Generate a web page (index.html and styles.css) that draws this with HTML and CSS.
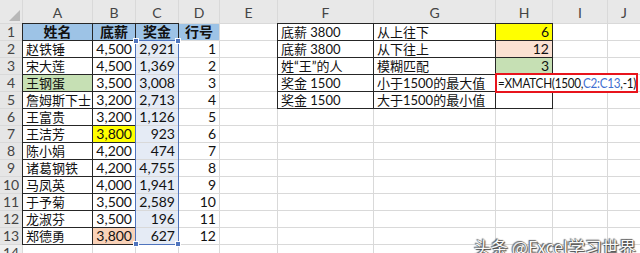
FILE: index.html
```html
<!DOCTYPE html>
<html lang="zh">
<head>
<meta charset="utf-8">
<link rel="stylesheet" href="styles.css">
</head>
<body>
<div class="sheet">
  <div class="corner"><span class="tri"></span></div>
  <div class="ch">A</div><div class="ch">B</div><div class="ch">C</div><div class="ch">D</div><div class="ch">E</div><div class="ch">F</div><div class="ch">G</div><div class="ch">H</div><div class="ch">I</div><div class="ch">J</div>

  <div class="rh">1</div><div class="c hd bk">姓名</div><div class="c hd bk">底薪</div><div class="c hd bk">奖金</div><div class="c hd">行号</div><div class="c"></div><div class="c t bk">底薪 3800</div><div class="c t bk">从上往下</div><div class="c n bk y">6</div><div class="c"></div><div class="c"></div>
  <div class="rh">2</div><div class="c t bk">赵铁锤</div><div class="c n bk">4,500</div><div class="c n s">2,921</div><div class="c n">1</div><div class="c"></div><div class="c t bk">底薪 3800</div><div class="c t bk">从下往上</div><div class="c n bk p">12</div><div class="c"></div><div class="c"></div>
  <div class="rh">3</div><div class="c t bk">宋大莲</div><div class="c n bk">4,500</div><div class="c n s">1,369</div><div class="c n">2</div><div class="c"></div><div class="c t bk">姓“王”的人</div><div class="c t bk">模糊匹配</div><div class="c n bk g">3</div><div class="c"></div><div class="c"></div>
  <div class="rh">4</div><div class="c t bk g">王钢蛋</div><div class="c n bk">3,500</div><div class="c n s">3,008</div><div class="c n">3</div><div class="c"></div><div class="c t bk">奖金 1500</div><div class="c t bk">小于1500的最大值</div><div class="c bk"></div><div class="c"></div><div class="c"></div>
  <div class="rh">5</div><div class="c t bk">詹姆斯下士</div><div class="c n bk">3,200</div><div class="c n s">2,713</div><div class="c n">4</div><div class="c"></div><div class="c t bk">奖金 1500</div><div class="c t bk">大于1500的最小值</div><div class="c bk"></div><div class="c"></div><div class="c"></div>
  <div class="rh">6</div><div class="c t bk">王富贵</div><div class="c n bk">3,200</div><div class="c n s">1,126</div><div class="c n">5</div><div class="c"></div><div class="c"></div><div class="c"></div><div class="c"></div><div class="c"></div><div class="c"></div>
  <div class="rh">7</div><div class="c t bk">王洁芳</div><div class="c n bk y">3,800</div><div class="c n s">923</div><div class="c n">6</div><div class="c"></div><div class="c"></div><div class="c"></div><div class="c"></div><div class="c"></div><div class="c"></div>
  <div class="rh">8</div><div class="c t bk">陈小娟</div><div class="c n bk">4,200</div><div class="c n s">474</div><div class="c n">7</div><div class="c"></div><div class="c"></div><div class="c"></div><div class="c"></div><div class="c"></div><div class="c"></div>
  <div class="rh">9</div><div class="c t bk">诸葛钢铁</div><div class="c n bk">4,200</div><div class="c n s">4,755</div><div class="c n">8</div><div class="c"></div><div class="c"></div><div class="c"></div><div class="c"></div><div class="c"></div><div class="c"></div>
  <div class="rh">10</div><div class="c t bk">马凤英</div><div class="c n bk">4,000</div><div class="c n s">1,941</div><div class="c n">9</div><div class="c"></div><div class="c"></div><div class="c"></div><div class="c"></div><div class="c"></div><div class="c"></div>
  <div class="rh">11</div><div class="c t bk">于予菊</div><div class="c n bk">3,500</div><div class="c n s">2,589</div><div class="c n">10</div><div class="c"></div><div class="c"></div><div class="c"></div><div class="c"></div><div class="c"></div><div class="c"></div>
  <div class="rh">12</div><div class="c t bk">龙淑芬</div><div class="c n bk">3,500</div><div class="c n s">196</div><div class="c n">11</div><div class="c"></div><div class="c"></div><div class="c"></div><div class="c"></div><div class="c"></div><div class="c"></div>
  <div class="rh">13</div><div class="c t bk">郑德勇</div><div class="c n bk pk">3,800</div><div class="c n s">627</div><div class="c n">12</div><div class="c"></div><div class="c"></div><div class="c"></div><div class="c"></div><div class="c"></div><div class="c"></div>
  <div class="rh lt">14</div><div class="c"></div><div class="c"></div><div class="c"></div><div class="c"></div><div class="c"></div><div class="c"></div><div class="c"></div><div class="c"></div><div class="c"></div><div class="c"></div>

  <div class="sel"><span class="hdl tl"></span><span class="hdl tr"></span><span class="hdl bl"></span><span class="hdl br"></span></div>
  <div class="formula"><span class="ftxt">=XMATCH(1500,<span class="ref">C2:C13</span>,-1)</span></div>
  <div class="mark">头条 @Excel学习世界</div>
</div>
</body>
</html>
```
FILE: styles.css
```css
html, body {
  margin: 0;
  padding: 0;
  background: #fff;
  overflow: hidden;
}
.sheet {
  position: relative;
  width: 640px;
  height: 253px;
  overflow: hidden;
  display: grid;
  grid-template-columns: 22px 69px 42px 42px 40px 57px 95px 121px 56px 54px 32px;
  grid-template-rows: 23px repeat(14, 16px);
  gap: 1px;
  background: #d9d9d9;
  font-family: Lato, "Noto Sans CJK SC", sans-serif;
  font-size: 14px;
  line-height: 16px;
  color: #111;
}
.corner {
  background: #e8e8e8;
  position: relative;
}
.tri {
  position: absolute;
  right: 2px;
  bottom: 2px;
  width: 0;
  height: 0;
  border-left: 11px solid transparent;
  border-bottom: 11px solid #b8b8b8;
}
.ch {
  background: #e8e8e8;
  color: #444;
  text-align: center;
  padding-top: 5px;
  font-size: 14px;
}
.rh {
  background: #e6e6e6;
  color: #444;
  text-align: center;
  font-size: 14px;
}
.rh.lt { background: #efefef; }
.c {
  background: #fff;
  white-space: nowrap;
  overflow: visible;
}
.t {
  padding-left: 3px;
  font-size: 13px;
}
.n {
  text-align: right;
  padding-right: 3px;
  font-size: 14px;
}
.hd {
  background: #9dc3e6;
  font-weight: bold;
  text-align: center;
  font-size: 14px;
}
.bk { box-shadow: 0 0 0 1px #262626; }
.s { background: #e5ebf5; }
.y { background: #ffff00; }
.p { background: #fbe1d2; }
.pk { background: #f9d2b8; }
.g { background: #c6e0b4; }
.sel {
  position: absolute;
  grid-column: 4 / 5;
  grid-row: 3 / 15;
  top: -1px;
  left: -1px;
  right: -1px;
  bottom: -1px;
  border: 1px solid #4f74bd;
}
.hdl {
  position: absolute;
  width: 4px;
  height: 4px;
  background: #4f74bd;
  border: 1px solid #fff;
}
.tl { top: -3px; left: -3px; }
.tr { top: -3px; right: -3px; }
.bl { bottom: -3px; left: -3px; }
.br { bottom: -3px; right: -3px; }
.formula {
  position: absolute;
  grid-column: 9 / 12;
  grid-row: 5 / 6;
  top: -2px;
  left: -1px;
  width: 138px;
  height: 16px;
  border: 2px solid #e8141c;
  background: #fff;
  font-size: 14px;
  line-height: 16px;
  padding-left: 1px;
  white-space: nowrap;
  overflow: hidden;
  box-sizing: content-box;
}
.ftxt {
  display: inline-block;
  letter-spacing: -0.3px;
  transform: scaleX(0.835);
  transform-origin: 0 50%;
}
.ref { color: #3f6fd1; }
.mark {
  position: absolute;
  grid-column: 8 / 12;
  grid-row: 14 / 16;
  right: 4px;
  bottom: 4px;
  font-family: "Noto Sans CJK SC", sans-serif;
  font-size: 17px;
  line-height: 20px;
  color: #fafafa;
  text-shadow: 0 0 1px #333, 1px 1px 1px #444, -1px -1px 1px #666;
  white-space: nowrap;
}
```
